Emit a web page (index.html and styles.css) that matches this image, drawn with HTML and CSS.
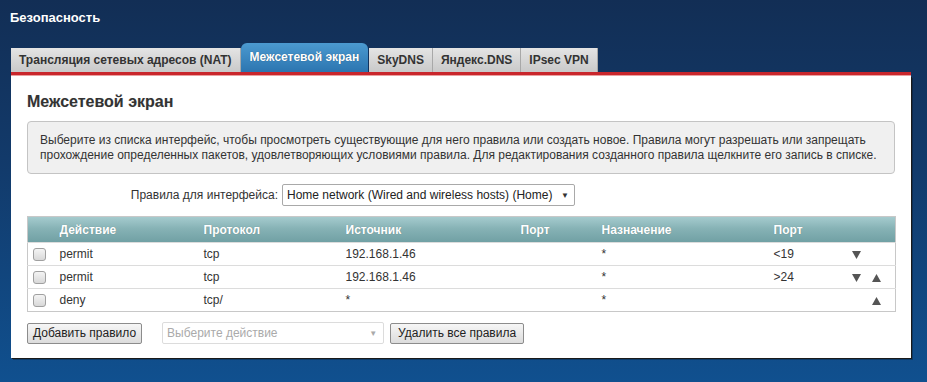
FILE: index.html
```html
<!DOCTYPE html>
<html lang="ru">
<head>
<meta charset="utf-8">
<title>Безопасность</title>
<link rel="stylesheet" href="styles.css">
</head>
<body>
<div class="page">
  <h1 class="page-title">Безопасность</h1>
  <div class="tabs">
    <div class="tab">Трансляция сетевых адресов (NAT)</div>
    <div class="tab tab-active">Межсетевой экран</div>
    <div class="tab">SkyDNS</div>
    <div class="tab">Яндекс.DNS</div>
    <div class="tab">IPsec VPN</div>
  </div>
  <div class="tab-line"></div>
  <div class="panel">
    <h2 class="panel-title">Межсетевой экран</h2>
    <div class="info">Выберите из списка интерфейс, чтобы просмотреть существующие для него правила или создать новое. Правила могут разрешать или запрещать прохождение определенных пакетов, удовлетворяющих условиями правила. Для редактирования созданного правила щелкните его запись в списке.</div>
    <div class="iface-row">
      <span class="iface-label">Правила для интерфейса:</span>
      <div class="select">Home network (Wired and wireless hosts) (Home)<span class="select-arrow">▼</span></div>
    </div>
    <table class="rules">
      <colgroup>
        <col class="c-cb"><col class="c-act"><col class="c-proto"><col class="c-src"><col class="c-port"><col class="c-dst"><col class="c-port2"><col class="c-arr">
      </colgroup>
      <thead>
        <tr><th></th><th>Действие</th><th>Протокол</th><th>Источник</th><th>Порт</th><th>Назначение</th><th>Порт</th><th></th></tr>
      </thead>
      <tbody>
        <tr><td><span class="cb"></span></td><td>permit</td><td>tcp</td><td>192.168.1.46</td><td></td><td>*</td><td>&lt;19</td>
          <td class="arrows"><svg class="arr" viewBox="0 0 9 9"><path d="M0 1h9L4.5 9z"/></svg></td></tr>
        <tr><td><span class="cb"></span></td><td>permit</td><td>tcp</td><td>192.168.1.46</td><td></td><td>*</td><td>&gt;24</td>
          <td class="arrows"><svg class="arr" viewBox="0 0 9 9"><path d="M0 1h9L4.5 9z"/></svg><svg class="arr" viewBox="0 0 9 9"><path d="M0 9h9L4.5 1z"/></svg></td></tr>
        <tr><td><span class="cb"></span></td><td>deny</td><td>tcp/</td><td>*</td><td></td><td>*</td><td></td>
          <td class="arrows"><span class="arr-gap"></span><svg class="arr" viewBox="0 0 9 9"><path d="M0 9h9L4.5 1z"/></svg></td></tr>
      </tbody>
    </table>
    <div class="actions">
      <button class="btn btn-add">Добавить правило</button>
      <div class="select select-disabled">Выберите действие<span class="select-arrow">▼</span></div>
      <button class="btn btn-del">Удалить все правила</button>
    </div>
  </div>
</div>
</body>
</html>
```
FILE: styles.css
```css
html, body {
  margin: 0;
  padding: 0;
}
body {
  width: 927px;
  height: 382px;
  overflow: hidden;
  background: linear-gradient(#122e55 0%, #123b6c 45%, #10508f 100%);
  font-family: "Liberation Sans", Arial, sans-serif;
  font-size: 12px;
  color: #333;
}
.page {
  padding: 10px 0 0 11px;
}
.page-title {
  margin: 0 0 0 -1px;
  font-size: 13px;
  font-weight: bold;
  color: #fff;
  line-height: 16px;
  height: 17px;
}
.tabs {
  display: flex;
  align-items: flex-end;
  margin-top: 16px;
  height: 29px;
}
.tab {
  height: 24px;
  line-height: 25px;
  padding: 0 8px;
  font-weight: bold;
  font-size: 12px;
  color: #333;
  background: linear-gradient(#e4e4e4, #c9c9c9);
  border-right: 1px solid #a8a8a8;
  white-space: nowrap;
}
.tab-active {
  height: 29px;
  line-height: 29px;
  padding: 0 9px;
  color: #fff;
  background: linear-gradient(#4b9ad0, #2c75b0);
  border-radius: 6px 6px 0 0;
  border-right: none;
  margin-right: 1px;
  text-shadow: 0 0 1px rgba(0,0,0,0.4);
}
.tab-line {
  width: 900px;
  height: 3px;
  background: #c9262c;
  border-bottom: 1px solid #e9a0a0;
}
.panel {
  width: 868px;
  background: #fff;
  padding: 16px 16px 14px 16px;
  box-shadow: 1px 1px 0 #1a1a1a, 2px 2px 0 rgba(0,0,0,0.25);
}
.panel-title {
  margin: 0 0 9px;
  font-size: 16px;
  font-weight: bold;
  line-height: 20px;
  color: #333;
  text-shadow: 0 0 1px rgba(0,0,0,0.15);
}
.info {
  background: #f0f0f0;
  border: 1px solid #c4c4c4;
  border-radius: 4px;
  padding: 11px 12px 10px 12px;
  line-height: 15px;
  color: #333;
}
.iface-row {
  display: grid;
  grid-template-columns: 251px auto;
  column-gap: 4px;
  justify-content: start;
  align-items: center;
  margin-top: 10px;
}
.iface-label {
  text-align: right;
}
.select {
  display: flex;
  align-items: center;
  justify-content: space-between;
  height: 20px;
  padding: 0 5px 0 4px;
  border: 1px solid #a9a9a9;
  border-radius: 2px;
  background: #fff;
  color: #222;
  white-space: nowrap;
  gap: 8px;
}
.iface-row .select {
  width: 282px;
}
.select-arrow {
  font-size: 8px;
  color: #333;
}
.rules {
  margin-top: 10px;
  width: 868px;
  border-collapse: collapse;
  table-layout: fixed;
  border: 1px solid #c8c8c8;
}
.c-cb { width: 32px; }
.c-act { width: 144px; }
.c-proto { width: 142px; }
.c-src { width: 175px; }
.c-port { width: 81px; }
.c-dst { width: 172px; }
.c-port2 { width: 70px; }
.c-arr { width: 52px; }
.rules thead tr {
  background: linear-gradient(#a5cbce 0%, #86b2b5 45%, #6f9fa3 100%);
}
.rules th {
  height: 25px;
  padding: 0;
  text-align: left;
  font-weight: bold;
  color: #fff;
  text-shadow: 0 0 1px rgba(0,0,0,0.25);
  white-space: nowrap;
}
.rules td {
  height: 22px;
  padding: 0;
  border-top: 1px solid #dcdcdc;
  color: #333;
  white-space: nowrap;
}
.cb {
  display: block;
  width: 11px;
  height: 11px;
  margin-left: 5px;
  border: 1px solid #a0a0a0;
  border-radius: 3px;
  background: linear-gradient(#f4f4f4, #d8d8d8);
}
.rules td.arrows {
  padding-left: 8px;
}
.arr {
  width: 9px;
  height: 9px;
  fill: #555;
  vertical-align: middle;
  margin-right: 11px;
}
.arr-gap {
  display: inline-block;
  width: 20px;
}
.actions {
  display: flex;
  align-items: center;
  margin-top: 10px;
}
.btn {
  height: 21px;
  padding: 0 5px;
  font-family: "Liberation Sans", Arial, sans-serif;
  font-size: 12px;
  color: #222;
  border: 1px solid #8c8c8c;
  border-radius: 2px;
  background: linear-gradient(#f6f6f6, #dcdcdc);
  white-space: nowrap;
}
.btn-add {
  margin-right: 20px;
}
.btn-del {
  padding: 0 7px;
}
.select-disabled {
  width: 210px;
  border-color: #dcdcdc;
  color: #aaa;
  margin-right: 6px;
  padding: 0 6px 0 4px;
}
.select-disabled .select-arrow {
  color: #aaa;
}
```
